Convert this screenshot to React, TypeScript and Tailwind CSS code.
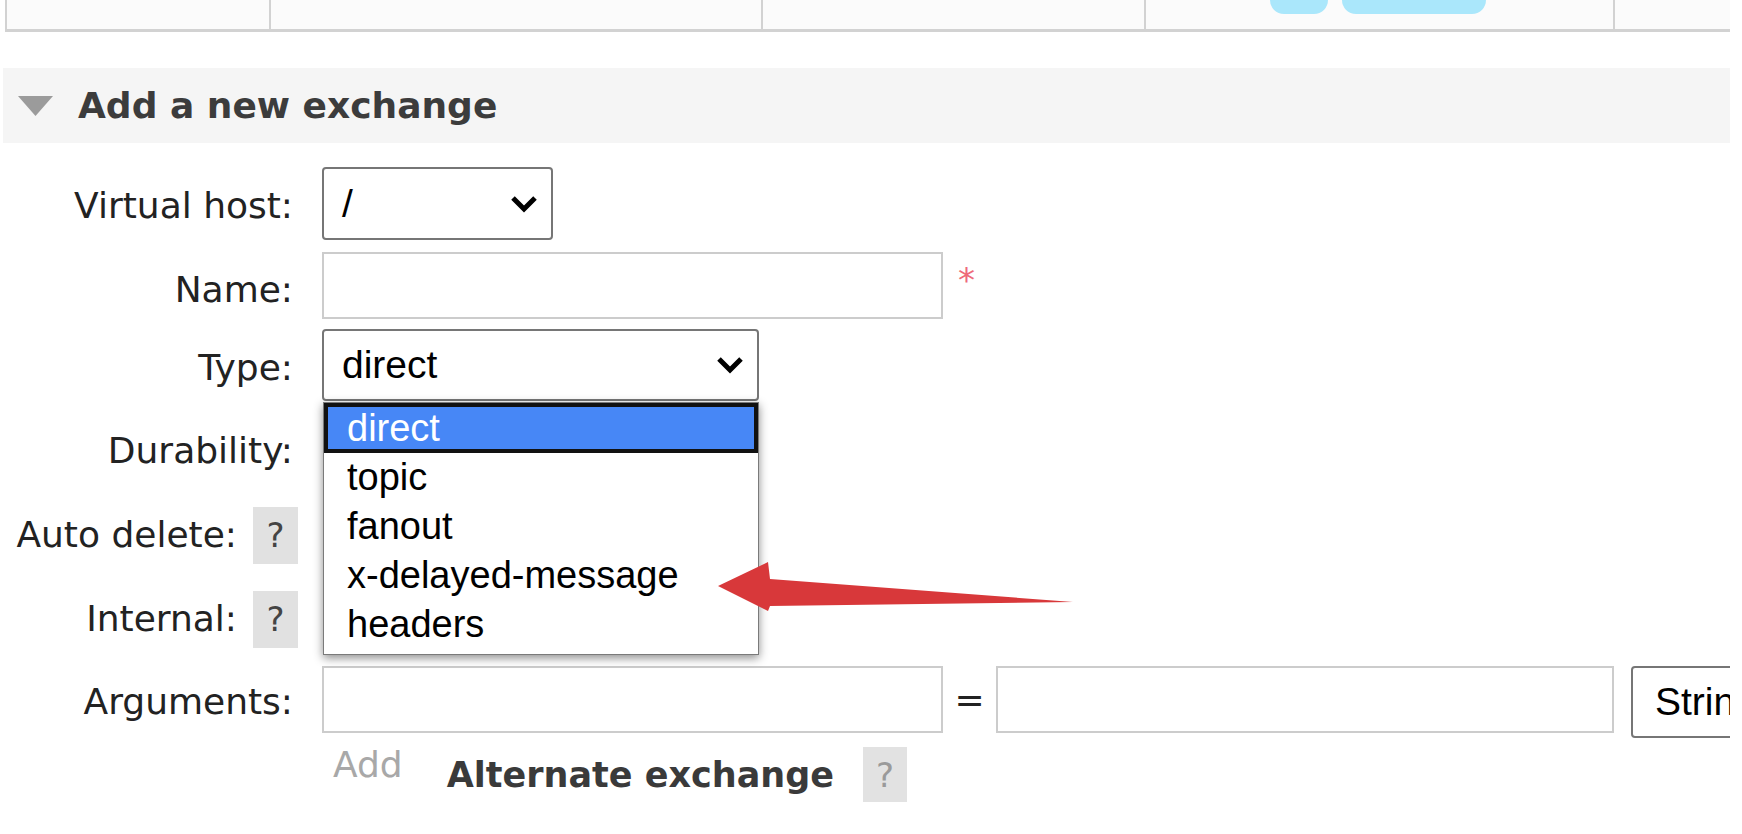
import React from "react";

//Chevron used on the select boxes
function Chevron() {
  return (
    <svg width="28" height="18" viewBox="0 0 28 18" fill="none">
      <path d="M3 3 L14 14 L25 3" stroke="#000" strokeWidth="5" />
    </svg>
  );
}

function SelectBox({ value, className }: { value: string; className: string }) {
  return (
    <div
      className={
        "shrink-0 flex items-center justify-between pl-[18px] pr-[13px] border-2 border-[#767676] rounded-[4px] bg-white font-['Liberation_Sans',Arial,sans-serif] text-[39px] leading-[44px] text-black " +
        className
      }
    >
      <span>{value}</span>
      <Chevron />
    </div>
  );
}

function Help({ light }: { light?: boolean }) {
  return (
    <span
      className={
        light
          ? "shrink-0 flex items-center justify-center w-[44px] h-[55px] bg-[#e2e2e2] text-[#9a9a9a] text-[34px]"
          : "shrink-0 flex items-center justify-center w-[45px] h-[57px] bg-[#e1e1e1] text-[#444] text-[34px]"
      }
    >
      ?
    </span>
  );
}

const options = ["direct", "topic", "fanout", "x-delayed-message", "headers"];

export default function App() {
  return (
    <div className="relative w-[1730px] h-[834px] overflow-hidden bg-white font-['DejaVu_Sans',Verdana,sans-serif] text-[#222]">
      {/* table row above, cut off */}
      <div className="ml-[5px] flex h-[32px] border-l-2 border-b-[3px] border-[#d2d2d2] bg-[#fbfbfb]">
        <div className="w-[264px] border-r-2 border-[#d2d2d2]" />
        <div className="w-[492px] border-r-2 border-[#d2d2d2]" />
        <div className="w-[383px] border-r-2 border-[#d2d2d2]" />
        <div className="w-[469px] border-r-2 border-[#d2d2d2] flex items-start gap-[14px] pl-[124px]">
          <div className="w-[58px] h-[14px] rounded-b-[14px] bg-[#aae7fb]" />
          <div className="w-[144px] h-[14px] rounded-b-[14px] bg-[#aae7fb]" />
        </div>
        <div className="flex-1" />
      </div>

      {/* section header */}
      <div className="mt-[36px] ml-[3px] h-[75px] bg-[#f5f5f5] flex items-center">
        <svg width="35" height="20" viewBox="0 0 35 20" className="ml-[15px]">
          <polygon points="0,0 35,0 17.5,20" fill="#9b9b9b" />
        </svg>
        <h2 className="ml-[25px] text-[36px] font-bold text-[#3c3c3c] leading-[44px]">
          Add a new exchange
        </h2>
      </div>

      {/* form */}
      <div className="flex flex-col text-[36px] leading-[40px]">
        <div className="flex items-center h-[73px] mt-[24px]">
          <label className="shrink-0 w-[298px] flex justify-end pr-[5px] pt-[5px]">Virtual host:</label>
          <SelectBox value="/" className="ml-[24px] w-[231px] h-[73px]" />
        </div>

        <div className="flex items-center h-[67px] mt-[12px]">
          <label className="shrink-0 w-[298px] flex justify-end pr-[5px] pt-[8px]">Name:</label>
          <input className="shrink-0 ml-[24px] w-[621px] h-[67px] border-2 border-[#cccccc] bg-white outline-none" />
          <span className="self-start ml-[15px] mt-[8px] text-[34px] text-[#ee6a7a]">*</span>
        </div>

        <div className="flex items-center h-[72px] mt-[10px]">
          <label className="shrink-0 w-[298px] flex justify-end pr-[5px] pt-[5px]">Type:</label>
          <div className="relative shrink-0 ml-[24px]">
            <SelectBox value="direct" className="w-[437px] h-[72px]" />
            {/* open dropdown list */}
            <ul className="absolute z-20 left-[1px] top-[73px] w-[436px] h-[253px] border border-[#7a7a7a] bg-white pb-[5px] shadow-[0_3px_9px_rgba(0,0,0,0.45)] font-['Liberation_Sans',Arial,sans-serif] text-[38px] text-black">
              {options.map((o, i) => (
                <li
                  key={o}
                  className={
                    i === 0
                      ? "h-[50px] border-4 border-[#111] bg-[#4787f6] text-white pl-[19px] leading-[42px]"
                      : "h-[49px] border-4 border-transparent pl-[19px] leading-[41px]"
                  }
                >
                  {o}
                </li>
              ))}
            </ul>
          </div>
        </div>

        <div className="flex items-center h-[72px] mt-[11px]">
          <label className="shrink-0 w-[298px] flex justify-end pr-[5px] pt-[5px]">Durability:</label>
        </div>

        <div className="flex items-center h-[72px] mt-[15px]">
          <div className="shrink-0 w-[298px] flex items-center justify-end gap-[16px]">
            <label>Auto delete:</label>
            <Help />
          </div>
        </div>

        <div className="flex items-center h-[72px] mt-[12px]">
          <div className="shrink-0 w-[298px] flex items-center justify-end gap-[16px]">
            <label>Internal:</label>
            <Help />
          </div>
        </div>

        <div className="flex items-start h-[67px] mt-[11px]">
          <label className="shrink-0 w-[298px] h-[67px] flex items-center justify-end pr-[5px] pt-[5px]">Arguments:</label>
          <input className="shrink-0 ml-[24px] w-[621px] h-[67px] border-2 border-[#cccccc] bg-white outline-none" />
          <span className="shrink-0 w-[53px] h-[67px] flex items-center justify-center">=</span>
          <input className="shrink-0 w-[618px] h-[67px] border-2 border-[#cccccc] bg-white outline-none" />
          <div className="ml-[17px] shrink-0 w-[200px] h-[72px] flex items-center pl-[22px] border-2 border-[#767676] rounded-[4px] font-['Liberation_Sans',Arial,sans-serif] text-[39px] text-black">
            String
          </div>
        </div>

        <div className="flex items-start h-[70px] mt-[7px] pl-[333px]">
          <a className="shrink-0 mt-[7px] text-[#a8a8a8] leading-[36px]">Add</a>
          <span className="shrink-0 ml-[44px] mt-[17px] font-bold text-[35px] text-[#3a3a3a] leading-[36px]">
            Alternate exchange
          </span>
          <span className="shrink-0 ml-[29px] mt-[7px]">
            <Help light />
          </span>
        </div>
      </div>

      {/* red annotation arrow */}
      <svg
        className="absolute z-30 left-[700px] top-[550px]"
        width="390"
        height="70"
        viewBox="700 550 390 70"
      >
        <polygon
          points="718,586 768,562 770,579 1073,602 770,606 768,611"
          fill="#d8383a"
        />
      </svg>
    </div>
  );
}
